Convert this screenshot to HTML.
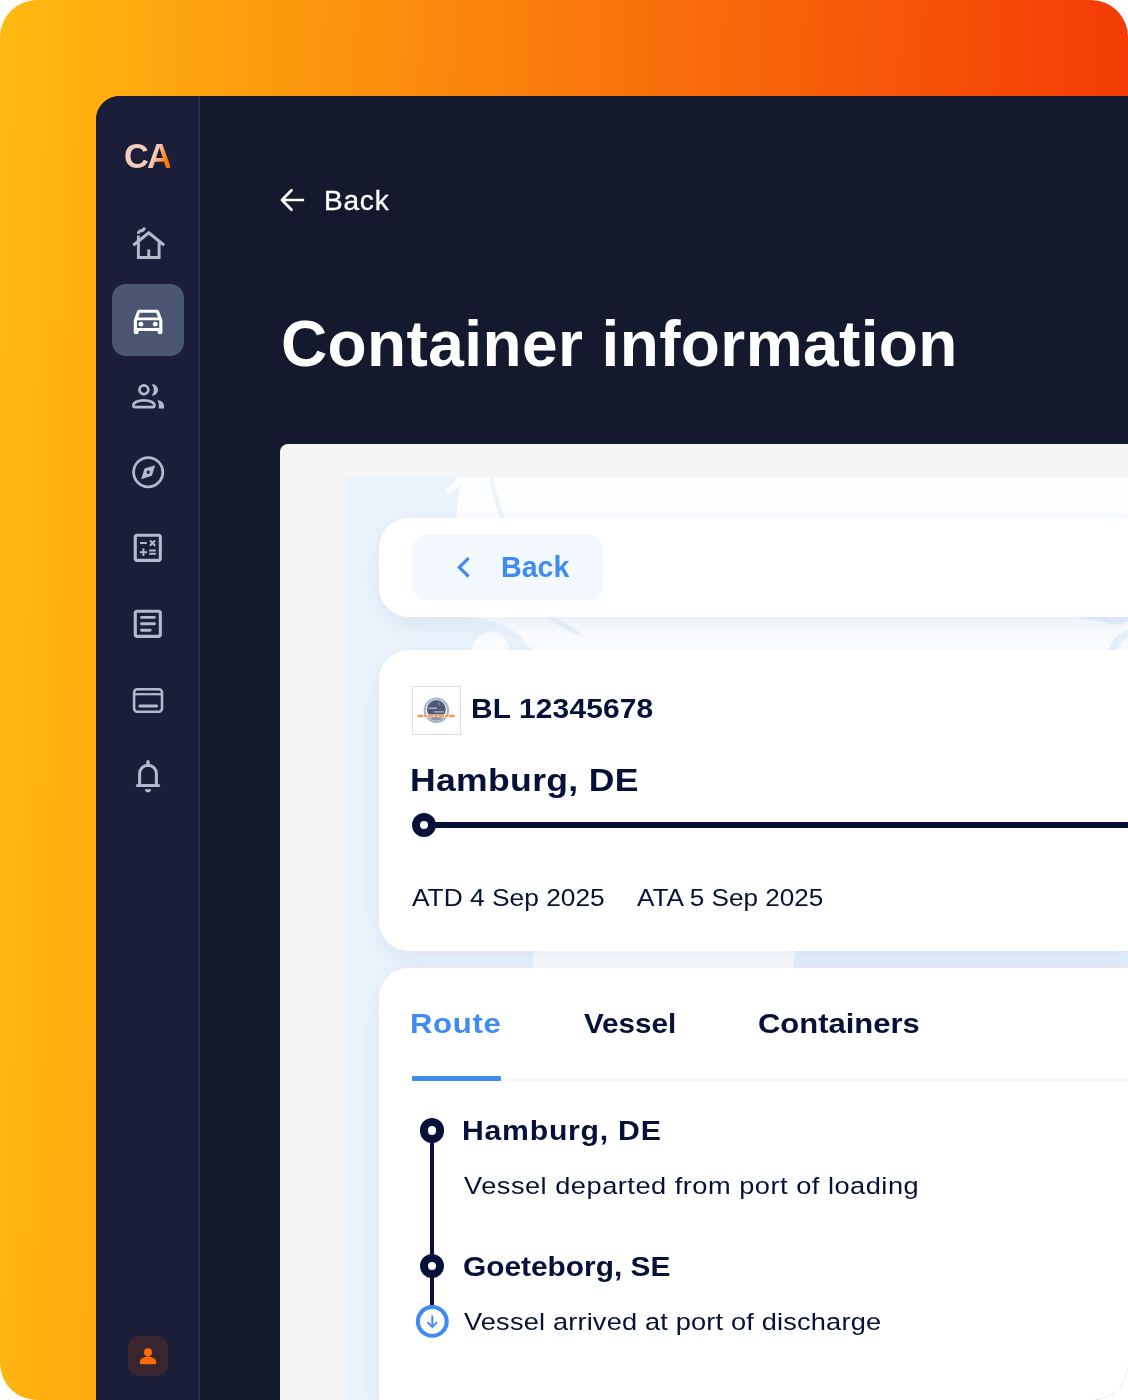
<!DOCTYPE html>
<html lang="en">
<head>
<meta charset="utf-8">
<title>Container information</title>
<style>
*{box-sizing:border-box;margin:0;padding:0}
html,body{width:1128px;height:1400px;background:#fff;overflow:hidden}
body{font-family:"Liberation Sans",sans-serif;position:relative}
.frame{position:absolute;left:0;top:0;width:1128px;height:1400px;border-radius:37px;overflow:hidden;
  background:linear-gradient(92deg,#ffba10 0%,#f43505 100%)}
.app{position:absolute;left:96px;top:96px;width:1032px;height:1304px;background:#14192e;border-top-left-radius:24px;overflow:hidden}
.side{position:absolute;left:0;top:0;width:102px;height:1304px;background:#1a1e39}
.divider{position:absolute;left:102px;top:0;width:2px;height:1304px;background:#273055}
.t{position:absolute;white-space:nowrap;line-height:1;will-change:transform}
.ico{position:absolute;overflow:visible}
.active{position:absolute;left:16px;top:188px;width:72px;height:72px;border-radius:14px;background:#4b5673}
.avatar{position:absolute;left:32px;top:1240px;width:40px;height:40px;border-radius:10px;background:#38252f}
.panel{position:absolute;left:184px;top:348px;width:848px;height:956px;background:#f5f5f5;border-top-left-radius:8px;overflow:hidden}
.map{position:absolute;left:66px;top:33px;width:782px;height:923px;background:#fdfeff;overflow:hidden}
.card{position:absolute;background:#fff;border-radius:30px 0 0 30px;box-shadow:0 8px 24px rgba(125,165,220,.19)}

.abs{position:absolute;left:0;top:0;width:1128px;height:1400px}
.btn{position:absolute;left:412px;top:535px;width:191px;height:65px;border-radius:15px;background:#f3f7fe}
.logo{position:absolute;left:412px;top:686px;width:49px;height:49px;border:1px solid #dadde7;background:#fff}
.pline{position:absolute;left:424px;top:821.500px;width:710px;height:6px;background:#071038}
.pdot{position:absolute;left:411.700px;top:812.500px;width:24px;height:24px;border-radius:50%;border:8px solid #071038;background:#fff}
.tabline{position:absolute;left:412px;top:1078.700px;width:720px;height:2px;background:#f3f4f8}
.tabul{position:absolute;left:411.500px;top:1076.300px;width:89.400px;height:4.700px;background:#3f8bf2;border-radius:1px}
.vline{position:absolute;left:430.100px;top:1130px;width:4px;height:180px;background:#071038}
.dot{position:absolute;width:24.700px;height:24.700px;border-radius:50%;border:8.200px solid #071038;background:#fff}
.navy{color:#071038}
.b{font-weight:700}
.m{transform-origin:0 50%}
</style>
</head>
<body>
<div class="frame">
 <div class="app">
  <div class="side"></div>
  <div class="divider"></div>
  <div class="active"></div>
  <div class="avatar"></div>


  <!-- sidebar icons -->
  <svg class="ico" id="i-home" style="left:34.800px;top:130px" width="35.500" height="37.800" preserveAspectRatio="none" viewBox="0 0 24 24" fill="#b4b9cc"><path d="M12 3L6 7.580V6H4v3.110L1 11.400l1.210 1.590L4 11.620V21h16v-9.380l1.790 1.360L23 11.400 12 3zm6 16h-5v-4h-2v4H6v-8.900l6-4.580 6 4.580V19zM10 1c0 1.660-1.340 3-3 3-.55 0-1 .45-1 1H4c0-1.660 1.340-3 3-3 .55 0 1-.45 1-1h2z"/></svg>
  <svg class="ico" id="i-car" style="left:32.700px;top:206.300px" width="38.200" height="36.700" preserveAspectRatio="none" viewBox="0 0 24 24" fill="#fff"><path d="M18.920 6.010C18.720 5.420 18.160 5 17.500 5h-11c-.66 0-1.210.42-1.420 1.010L3 12v8c0 .55.450 1 1 1h1c.55 0 1-.45 1-1v-1h12v1c0 .55.450 1 1 1h1c.55 0 1-.45 1-1v-8l-2.080-5.990zM6.850 7h10.290l1.080 3.110H5.770L6.850 7zM19 17H5v-5h14v5z"/><circle cx="7.500" cy="14.500" r="1.500"/><circle cx="16.500" cy="14.500" r="1.500"/></svg>
  <svg class="ico" id="i-people" style="left:34px;top:286px" width="36" height="28" viewBox="130 382 36 28" fill="none" stroke="#b4b9cc" stroke-width="2.700"><circle cx="143.900" cy="389.800" r="4.400"/><path d="M133.300 405.500c0-3 4.600-5.100 10.600-5.100s10.600 2.100 10.600 5.100c0 1-.7 1.600-1.700 1.600h-17.800c-1 0-1.700-.6-1.700-1.600z"/><path d="M151.700 384.300A5.730 5.730 0 1 1 151.700 395.700A8.490 8.490 0 0 0 151.700 384.300zM157.200 399.800c4.200.9 6.800 2.900 6.800 6v2.700h-5.200v-3c0-2.200-.5-4-1.600-5.700z" fill="#b4b9cc" stroke="none"/></svg>
  <svg class="ico" id="i-explore" style="left:32.800px;top:356.800px" width="38.400" height="38.400" viewBox="0 0 24 24" fill="#b4b9cc"><circle cx="12" cy="12" r="9.130" fill="none" stroke="#b4b9cc" stroke-width="1.750"/><path d="M7.600 16.400l6.700-2.100 2.100-6.700-6.700 2.100-2.100 6.700zM12 11c.55 0 1 .45 1 1s-.45 1-1 1-1-.45-1-1 .45-1 1-1z"/></svg>
  <svg class="ico" id="i-calc" style="left:33.200px;top:433.400px" width="37.600" height="37.600" viewBox="0 0 24 24" fill="#b4b9cc"><path d="M19 3H5c-1.100 0-2 .9-2 2v14c0 1.100.9 2 2 2h14c1.100 0 2-.9 2-2V5c0-1.100-.9-2-2-2zm0 16H5V5h14v14z"/><path transform="translate(12 12) scale(.86) translate(-12 -12)" d="M6.250 7.720h5v1.500h-5zM13 15.750h5v1.500h-5zM13 13.250h5v1.500h-5zM8 18h1.500v-2h2v-1.500h-2v-2H8v2H6V16h2zM14.090 10.950l1.410-1.410 1.410 1.410 1.060-1.060-1.410-1.420 1.410-1.410L16.910 6 15.500 7.410 14.090 6l-1.060 1.060 1.410 1.410-1.410 1.420z"/></svg>
  <svg class="ico" id="i-article" style="left:33.200px;top:509.400px" width="37.600" height="37.600" viewBox="0 0 24 24" fill="#b4b9cc"><path d="M19 3H5c-1.100 0-2 .9-2 2v14c0 1.100.9 2 2 2h14c1.100 0 2-.9 2-2V5c0-1.100-.9-2-2-2zm0 16H5V5h14v14z"/><path d="M8 7.900h8.200M8 12h8.200M8 16.100h5.500" fill="none" stroke="#b4b9cc" stroke-width="1.900" stroke-linecap="round"/></svg>
  <svg class="ico" id="i-card" style="left:34px;top:590px" width="36" height="29" viewBox="130 686 36 29" fill="none" stroke="#b4b9cc" stroke-width="2.600" stroke-linecap="round"><rect x="134.100" y="689.300" width="27.900" height="22.400" rx="3.200"/><path d="M134.500 694.200h27.200" stroke-linecap="butt" stroke-width="2.200"/><path d="M139.800 706.100h16.800" stroke-width="3"/></svg>
  <svg class="ico" id="i-bell" style="left:36px;top:662px" width="32" height="36" viewBox="132 758 32 36" fill="none" stroke="#b4b9cc" stroke-width="3" stroke-linecap="round" stroke-linejoin="round"><path d="M139.600 784.500v-10.800c0-5 3.700-8.400 8.400-8.400s8.400 3.400 8.400 8.400v10.800"/><path d="M137.400 785.600h21.200" stroke-width="3"/><path d="M148 761.700v3.500" stroke-width="3.400"/><path d="M144.900 789.200h6.200a3.100 3.100 0 0 1-6.200 0z" fill="#b4b9cc" stroke="none"/></svg>
  <svg class="ico" id="i-user" style="left:42px;top:1250px" width="20" height="20" viewBox="138 1346 20 20" fill="#ff6a0a"><circle cx="148" cy="1352.200" r="4"/><path d="M139.700 1362.200c0-3.400 4.800-5.700 8.300-5.700s8.300 2.300 8.300 5.700c0 1.300-.8 2-2 2h-12.600c-1.200 0-2-.7-2-2z"/></svg>

  <!-- logo -->
  <div class="t b" id="logo" style="left:28.0px;top:43.0px;font-size:34.5px;background:linear-gradient(112deg,#f6cfc0 0%,#f5c9b6 62%,#f5a566 72%,#ff7a08 84%,#ff6a00 100%);-webkit-background-clip:text;background-clip:text;color:transparent;letter-spacing:-1.8px">CA</div>

  <!-- top back -->
  <svg class="ico" style="left:184px;top:92px" width="25" height="24" viewBox="0 0 25 24" fill="none" stroke="#fff" stroke-width="2.7" stroke-linecap="round" stroke-linejoin="round"><path d="M23 12H2.2M11.5 2.2L2 12l9.500 9.800"/></svg>
  <div class="t" id="back1" style="left:227.8px;top:91.3px;font-size:28px;color:#fff;letter-spacing:0.8px;-webkit-text-stroke:.35px #fff">Back</div>

  <!-- title -->
  <div class="t b" id="title" style="left:185.0px;top:216.0px;font-size:64px;color:#fff;letter-spacing:0.4px">Container information</div>

  <div class="panel">

   <div class="map" id="map">
    <svg style="position:absolute;left:0;top:0" width="782" height="923" viewBox="346 477 782 923">
     <rect x="346" y="477" width="782" height="923" fill="#fdfeff"/>
     <!-- water -->
     <path d="M346 477H458c-3 6-10 9-13 15 6 3 12-4 16-8-2 10-5 22-4 34V617c20 0 46 4 62 18 6 6 8 11 14 15V951l0 17H420V1400H346z" fill="#ecf4fb"/>
     <path d="M493 477c2 14 8 28 11 41h-4c-4-13-9-27-11-41z" fill="#ecf4fb"/>
     <path d="M472 650c2-12 12-20 24-18 8 2 12 10 14 18z" fill="#fdfeff"/>
     <path d="M548 617c12 2 26 10 34 18-10 0-22-8-34-18z" fill="#e9f2fa"/>
     <path d="M795 951h333v20h-333c-4-6 2-12 0-20z" fill="#e9f2fa"/>
     <path d="M1074 620c8-3 16-3 22-3h32v5c-10 4-20 2-28-1-8-2-16-3-26-1z" fill="#e6f0fa"/><path d="M1128 630c-10 3-17 10-19 20h8c2-6 6-10 11-12z" fill="#e9f2fb"/>
    </svg>
    <div class="card" style="left:33px;top:41px;width:760px;height:99px"></div>
    <div class="card" style="left:33px;top:173px;width:760px;height:301px"></div>
    <div class="card" style="left:33px;top:491px;width:760px;height:460px"></div>
   </div>
  </div>
 </div>

 <!-- inner content (page coordinates) -->
 <div class="abs">
  <div class="btn"></div>
  <svg class="ico" style="left:455px;top:555px" width="17" height="25" viewBox="455 555 17 25" fill="none" stroke="#3f8bf2" stroke-width="3.200" stroke-linecap="butt" stroke-linejoin="miter"><path d="M468.600 558.100L459.300 567.300l9.300 9.200"/></svg>
  <div class="t b" id="back2" style="left:500.8px;top:552.9px;font-size:28.600px;color:#3f8bf2;letter-spacing:0px">Back</div>

  <div class="logo"></div>
  <svg class="ico" style="left:416px;top:696px" width="42" height="30" viewBox="416 696 42 30"><circle cx="436.400" cy="710.200" r="11.700" fill="#fff" stroke="#aab3c8" stroke-width="2"/><circle cx="436.400" cy="710.200" r="10.100" fill="none" stroke="#e6e9f0" stroke-width="1"/><circle cx="436.400" cy="709.400" r="9.400" fill="#4c5a7a"/><path d="M428.400 708.300h8.600M433.700 711.900h10.300" stroke="#aeb7cb" stroke-width="1.400"/><path d="M438.500 703.200l1.600 1.300" stroke="#c9cfdd" stroke-width="1"/><path d="M426 716h21" stroke="#fff" stroke-width="3"/><path d="M429.300 717.500a9.400 9.400 0 0 0 14.200 0z" fill="#8a95ae"/><path d="M417.600 716h37.400" stroke="#f0a15c" stroke-width="2.400" stroke-dasharray="5.500 .7 3 .6 6 .7 4.200 .6"/></svg>

  <div class="t b navy m" id="bl" style="left:471.3px;top:695.0px;font-size:27.200px;letter-spacing:.13px;transform:scaleX(1.1)">BL 12345678</div>
  <div class="t b navy m" id="ham1" style="left:410.0px;top:764.2px;font-size:32px;letter-spacing:0.315px;transform:scaleX(1.11)">Hamburg, DE</div>

  <div class="pline"></div>
  <div class="pdot"></div>

  <div class="t navy m" id="atd" style="left:411.7px;top:885.6px;font-size:24px;letter-spacing:0px;transform:scaleX(1.097)">ATD 4 Sep 2025</div>
  <div class="t navy m" id="ata" style="left:637.1px;top:885.6px;font-size:24px;letter-spacing:0px;transform:scaleX(1.088)">ATA 5 Sep 2025</div>

  <div class="t b m" id="tab1" style="left:410.0px;top:1010.3px;font-size:28px;color:#3f8bf2;letter-spacing:.6px;transform:scaleX(1.11)">Route</div>
  <div class="t b navy m" id="tab2" style="left:584.3px;top:1010.3px;font-size:28px;letter-spacing:0px;transform:scaleX(1.058)">Vessel</div>
  <div class="t b navy m" id="tab3" style="left:758.0px;top:1010.3px;font-size:28px;letter-spacing:0px;transform:scaleX(1.106)">Containers</div>
  <div class="tabline"></div>
  <div class="tabul"></div>

  <div class="vline"></div>
  <div class="dot" style="left:419.800px;top:1118px"></div>
  <div class="dot" style="left:419.800px;top:1253.500px"></div>
  <svg class="ico" style="left:414px;top:1303px" width="36" height="36" viewBox="414 1303 36 36" fill="none" stroke="#3f8bf2"><circle cx="432.300" cy="1321.400" r="14.400" stroke-width="4.100" fill="#fff"/><path d="M432.300 1315.400v11.200M427.400 1322.100l4.900 4.900 4.900-4.900" stroke-width="1.900" stroke-linecap="butt" stroke-linejoin="miter"/></svg>

  <div class="t b navy m" id="ham2" style="left:461.8px;top:1117.300px;font-size:27.200px;letter-spacing:0.69px;transform:scaleX(1.11)">Hamburg, DE</div>
  <div class="t navy m" id="dep" style="left:463.8px;top:1173.9px;font-size:24.500px;letter-spacing:0.457px;transform:scaleX(1.11)">Vessel departed from port of loading</div>
  <div class="t b navy m" id="goe" style="left:462.8px;top:1253.0px;font-size:27.200px;letter-spacing:0px;transform:scaleX(1.098)">Goeteborg, SE</div>
  <div class="t navy m" id="arr" style="left:463.8px;top:1310.1px;font-size:24.500px;letter-spacing:0.156px;transform:scaleX(1.11)">Vessel arrived at port of discharge</div>
 </div>
</div>
</body>
</html>
